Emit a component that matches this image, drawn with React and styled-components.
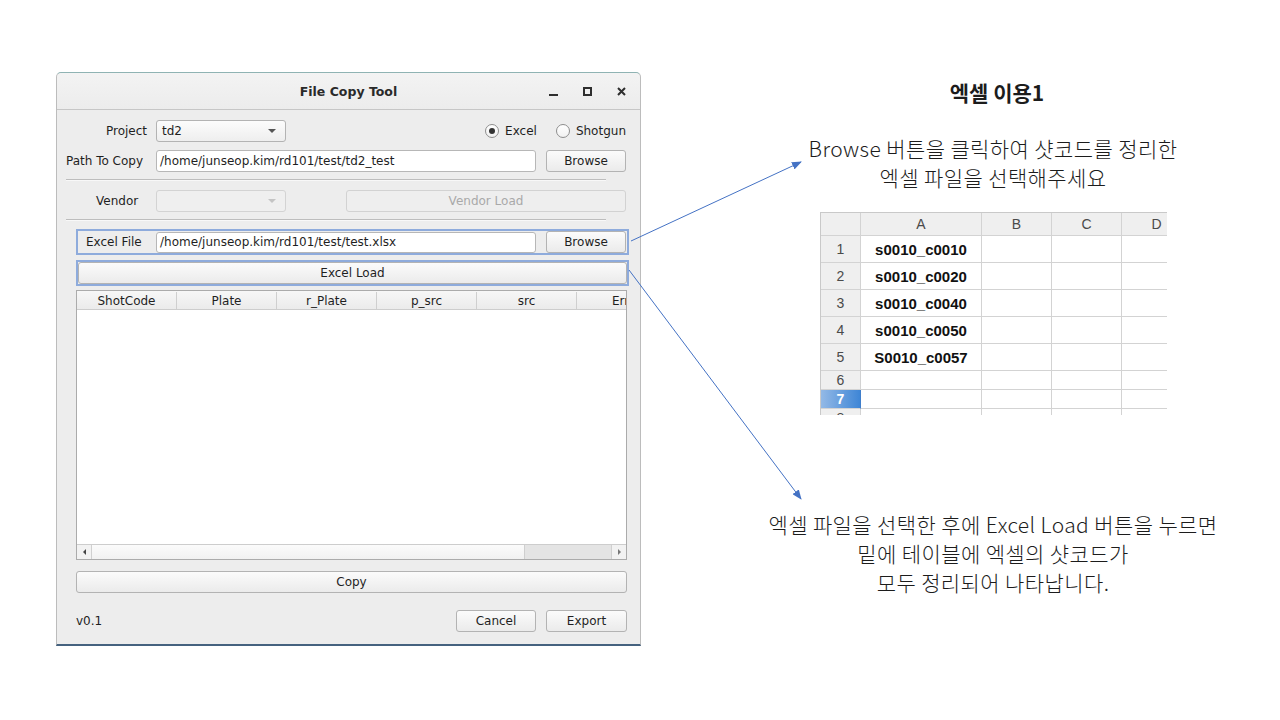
import React from 'react';
import styled, { createGlobalStyle } from 'styled-components';

const GlobalStyle = createGlobalStyle`
  html, body {
    margin: 0;
    padding: 0;
    background: #fff;
  }
  #root {
    width: 1280px;
    height: 720px;
  }
`;

const Page = styled.div`
  position: relative;
  display: flex;
  align-items: flex-start;
  width: 1280px;
  height: 720px;
  background: #fff;
  overflow: hidden;
`;

/* ---------- the Qt dialog ---------- */

const Window = styled.div`
  margin: 72px 0 0 56px;
  width: 585px;
  height: 574px;
  box-sizing: border-box;
  display: flex;
  flex-direction: column;
  background: #ededed;
  border: 1px solid #bcbcbc;
  border-top-color: #8fb3b3;
  border-bottom: 2px solid #45627f;
  border-radius: 5px 5px 0 0;
  font-family: "DejaVu Sans", sans-serif;
  font-size: 12px;
  color: #1f1f1f;
`;

const TitleBar = styled.div`
  display: grid;
  grid-template-columns: 1fr auto 1fr;
  align-items: center;
  height: 36px;
  border-bottom: 1px solid #c6c6c6;
  background: linear-gradient(#f3f3f3, #ececec);
  border-radius: 5px 5px 0 0;
`;

const Title = styled.div`
  grid-column: 2;
  font-weight: bold;
  font-size: 12.5px;
  color: #2a2a2a;
`;

const WindowControls = styled.div`
  justify-self: end;
  display: flex;
  align-items: center;
  gap: 25px;
  padding-right: 14px;
  svg {
    display: block;
  }
`;

const Body = styled.div`
  display: flex;
  flex-direction: column;
  padding: 0 14px 0 9px;
`;

const Row = styled.div`
  display: flex;
  align-items: center;
  height: 22px;
  margin-top: ${p => p.top || 0}px;
`;

const Label = styled.div`
  flex-shrink: 0;
  width: ${p => p.w}px;
  padding-left: ${p => p.pl || 0}px;
  box-sizing: border-box;
  text-align: ${p => p.align || 'left'};
  white-space: nowrap;
`;

const TextInput = styled.div`
  flex-shrink: 0;
  width: ${p => p.w || 380}px;
  height: ${p => p.h || 22}px;
  box-sizing: border-box;
  display: flex;
  align-items: center;
  padding-left: 3px;
  background: #fff;
  border: 1px solid #b7b7b7;
  border-radius: 3px;
  white-space: nowrap;
  overflow: hidden;
`;

const Button = styled.div`
  flex-shrink: 0;
  width: ${p => (p.w ? `${p.w}px` : 'auto')};
  height: 22px;
  margin-left: ${p => p.ml || 0}px;
  box-sizing: border-box;
  display: flex;
  align-items: center;
  justify-content: center;
  border: 1px solid ${p => (p.disabled ? '#d2d2d2' : '#b3b3b3')};
  border-radius: 3px;
  background: ${p =>
    p.disabled ? '#eeeeee' : 'linear-gradient(#fbfbfb, #ebebeb)'};
  color: ${p => (p.disabled ? '#a9a9a9' : '#1f1f1f')};
`;

const Combo = styled.div`
  flex-shrink: 0;
  width: 130px;
  height: 22px;
  margin-left: ${p => p.ml || 0}px;
  box-sizing: border-box;
  display: flex;
  align-items: center;
  padding: 0 9px 0 5px;
  border: 1px solid ${p => (p.disabled ? '#d3d3d3' : '#b3b3b3')};
  border-radius: 3px;
  background: ${p =>
    p.disabled ? '#efefef' : 'linear-gradient(#fcfcfc, #eeeeee)'};
  &::after {
    content: '';
    margin-left: auto;
    border-left: 4px solid transparent;
    border-right: 4px solid transparent;
    border-top: 4px solid ${p => (p.disabled ? '#c4c4c4' : '#555')};
  }
`;

const RadioGroup = styled.div`
  margin-left: auto;
  display: flex;
  align-items: center;
  gap: 19px;
`;

const RadioItem = styled.div`
  display: flex;
  align-items: center;
  gap: 6px;
`;

const RadioCircle = styled.span`
  width: 14px;
  height: 14px;
  box-sizing: border-box;
  border-radius: 50%;
  border: 1px solid #8e8e8e;
  background: linear-gradient(#ffffff, #f1f1f1);
  display: flex;
  align-items: center;
  justify-content: center;
  &::after {
    content: '';
    width: 6px;
    height: 6px;
    border-radius: 50%;
    background: ${p => (p.checked ? '#333' : 'transparent')};
  }
`;

const Separator = styled.div`
  width: 540px;
  height: 1px;
  margin-top: ${p => p.top}px;
  background: #bdbdbd;
  border-bottom: 1px solid #f8f8f8;
`;

const Highlight = styled.div`
  display: flex;
  align-items: center;
  width: 553px;
  height: 26px;
  box-sizing: border-box;
  margin: ${p => p.top}px 0 0 10px;
  border: 2px solid #8eabdc;
`;

const WideButton = styled(Button)`
  flex: ${p => (p.w ? 'none' : 1)};
  margin: ${p => p.top || 0}px 0 0 ${p => p.ml || 0}px;
`;

const Table = styled.div`
  margin: 4px 0 0 10px;
  width: 551px;
  height: 270px;
  box-sizing: border-box;
  display: flex;
  flex-direction: column;
  border: 1px solid #ababab;
  background: #fff;
`;

const TableHeader = styled.div`
  display: flex;
  height: 19px;
  box-sizing: border-box;
  border-bottom: 1px solid #cdcdcd;
  background: linear-gradient(#f7f7f7, #ebebeb);
  overflow: hidden;
  padding-top: 1px;
`;

const HeaderCell = styled.div`
  flex-shrink: 0;
  width: 100px;
  box-sizing: border-box;
  border-right: 1px solid #cfcfcf;
  display: flex;
  align-items: center;
  justify-content: center;
`;

const TableBody = styled.div`
  flex: 1;
`;

const ScrollBar = styled.div`
  display: flex;
  height: 14px;
  border-top: 1px solid #cdcdcd;
  background: #e6e6e6;
`;

const ScrollArrow = styled.div`
  width: 14px;
  display: flex;
  align-items: center;
  justify-content: center;
  background: #f2f2f2;
  border-${p => (p.right ? 'left' : 'right')}: 1px solid #d0d0d0;
  &::after {
    content: '';
    border-top: 3px solid transparent;
    border-bottom: 3px solid transparent;
    ${p =>
      p.right
        ? 'border-left: 3px solid #777;'
        : 'border-right: 3px solid #444;'}
  }
`;

const ScrollThumb = styled.div`
  width: 433px;
  box-sizing: border-box;
  background: linear-gradient(#fbfbfb, #f1f1f1);
  border-right: 1px solid #cfcfcf;
`;

const ScrollTrack = styled.div`
  flex: 1;
  background: #e4e4e4;
`;

const Footer = styled.div`
  display: flex;
  align-items: center;
  width: 551px;
  height: 22px;
  margin: 17px 0 0 10px;
`;

const Version = styled.div`
  margin-right: auto;
`;

/* ---------- annotations ---------- */

const Notes = styled.div`
  margin-left: 117px;
  width: 470px;
  display: flex;
  flex-direction: column;
  align-items: center;
  text-align: center;
  font-family: "Noto Sans CJK KR", "Noto Sans", sans-serif;
  color: #1c1c1c;
`;

const NoteTitle = styled.div`
  margin-top: 78px;
  font-size: 21px;
  line-height: 29px;
  font-weight: 700;
  padding-left: 8px;
`;

const NoteText = styled.div`
  margin-top: ${p => p.top}px;
  font-size: 21px;
  line-height: 29px;
  font-weight: 300;
  letter-spacing: 0.4px;
  white-space: nowrap;
`;

const Sheet = styled.div`
  align-self: flex-start;
  margin: 20px 0 0 62px;
  width: 347px;
  height: 203px;
  box-sizing: border-box;
  overflow: hidden;
  display: grid;
  grid-template-columns: 40px 121px 70px 70px 70px;
  grid-template-rows: 23px repeat(5, 27px) 19px 19px 19px;
  border-top: 1px solid #c9c9c9;
  border-left: 1px solid #c9c9c9;
  font-family: "Liberation Sans", Arial, sans-serif;
`;

const SheetCell = styled.div`
  box-sizing: border-box;
  border-right: 1px solid #d3d3d3;
  border-bottom: 1px solid #d3d3d3;
  display: flex;
  align-items: center;
  justify-content: center;
  font-size: ${p => (p.head ? 14 : 15)}px;
  font-weight: ${p => (p.head ? 400 : 700)};
  color: ${p => (p.head ? '#4a4a4a' : '#111')};
  background: ${p => (p.head ? '#efefef' : '#fff')};
  ${p =>
    p.active &&
    `
    background: linear-gradient(90deg, #93b9e6, #3f86d6);
    color: #fff;
    font-weight: 700;
    border-right-color: #3f7ecb;
  `}
`;

const ArrowLayer = styled.svg`
  position: absolute;
  inset: 0;
  pointer-events: none;
`;

const MinimizeIcon = () => (
  <svg width="9" height="10" viewBox="0 0 9 10">
    <rect x="0" y="8" width="9" height="2" fill="#2e2e2e" />
  </svg>
);

const MaximizeIcon = () => (
  <svg width="9" height="9" viewBox="0 0 9 9">
    <rect x="1" y="1" width="7" height="7" fill="none" stroke="#2e2e2e" strokeWidth="2" />
  </svg>
);

const CloseIcon = () => (
  <svg width="9" height="9" viewBox="0 0 9 9">
    <path d="M1 1 L8 8 M8 1 L1 8" stroke="#2e2e2e" strokeWidth="2" />
  </svg>
);

const columns = ['ShotCode', 'Plate', 'r_Plate', 'p_src', 'src', 'Error'];
const shots = ['s0010_c0010', 's0010_c0020', 's0010_c0040', 's0010_c0050', 'S0010_c0057'];

const sheetRows = () => {
  const cells = [];
  ['', 'A', 'B', 'C', 'D'].forEach(l => cells.push(<SheetCell head key={`h_${l}`}>{l}</SheetCell>));
  for (let r = 1; r <= 8; r += 1) {
    cells.push(
      <SheetCell head active={r === 7} key={`r_${r}`}>
        {r}
      </SheetCell>
    );
    cells.push(<SheetCell key={`a_${r}`}>{shots[r - 1] || ''}</SheetCell>);
    ['b', 'c', 'd'].forEach(c => cells.push(<SheetCell key={`${c}_${r}`} />));
  }
  return cells;
};

const App = () => (
  <Page>
    <GlobalStyle />
    <Window>
      <TitleBar>
        <Title>File Copy Tool</Title>
        <WindowControls>
          <MinimizeIcon />
          <MaximizeIcon />
          <CloseIcon />
        </WindowControls>
      </TitleBar>
      <Body>
        <Row top={10}>
          <Label w={81} align="right">Project</Label>
          <Combo ml={9}>td2</Combo>
          <RadioGroup>
            <RadioItem>
              <RadioCircle checked />
              Excel
            </RadioItem>
            <RadioItem>
              <RadioCircle />
              Shotgun
            </RadioItem>
          </RadioGroup>
        </Row>
        <Row top={8}>
          <Label w={90}>Path To Copy</Label>
          <TextInput>/home/junseop.kim/rd101/test/td2_test</TextInput>
          <Button w={80} ml={10}>Browse</Button>
        </Row>
        <Separator top={7} />
        <Row top={9}>
          <Label w={90} pl={30}>Vendor</Label>
          <Combo disabled />
          <Button w={280} ml={60} disabled>Vendor Load</Button>
        </Row>
        <Separator top={7} />
        <Highlight top={8}>
          <Label w={78} pl={8}>Excel File</Label>
          <TextInput h={21}>/home/junseop.kim/rd101/test/test.xlsx</TextInput>
          <Button w={80} ml={10}>Browse</Button>
        </Highlight>
        <Highlight top={5}>
          <WideButton>Excel Load</WideButton>
        </Highlight>
        <Table>
          <TableHeader>
            {columns.map(c => (
              <HeaderCell key={c}>{c}</HeaderCell>
            ))}
          </TableHeader>
          <TableBody />
          <ScrollBar>
            <ScrollArrow />
            <ScrollThumb />
            <ScrollTrack />
            <ScrollArrow right />
          </ScrollBar>
        </Table>
        <WideButton top={11} ml={10} w={551}>Copy</WideButton>
        <Footer>
          <Version>v0.1</Version>
          <Button w={80}>Cancel</Button>
          <Button w={81} ml={10}>Export</Button>
        </Footer>
      </Body>
    </Window>

    <Notes>
      <NoteTitle>엑셀 이용1</NoteTitle>
      <NoteText top={27}>
        Browse 버튼을 클릭하여 샷코드를 정리한
        <br />
        엑셀 파일을 선택해주세요
      </NoteText>
      <Sheet>{sheetRows()}</Sheet>
      <NoteText top={95}>
        엑셀 파일을 선택한 후에 Excel Load 버튼을 누르면
        <br />
        밑에 테이블에 엑셀의 샷코드가
        <br />
        모두 정리되어 나타납니다.
      </NoteText>
    </Notes>

    <ArrowLayer width="1280" height="720" viewBox="0 0 1280 720">
      <defs>
        <marker
          id="arrowHead"
          markerWidth="10"
          markerHeight="8"
          refX="9"
          refY="4"
          orient="auto"
          markerUnits="userSpaceOnUse"
        >
          <path d="M0 0 L10 4 L0 8 Z" fill="#4472c4" />
        </marker>
      </defs>
      <line x1="631" y1="241" x2="801" y2="162" stroke="#4472c4" strokeWidth="1" markerEnd="url(#arrowHead)" />
      <line x1="629" y1="270" x2="801" y2="499" stroke="#4472c4" strokeWidth="1" markerEnd="url(#arrowHead)" />
    </ArrowLayer>
  </Page>
);

export default App;
